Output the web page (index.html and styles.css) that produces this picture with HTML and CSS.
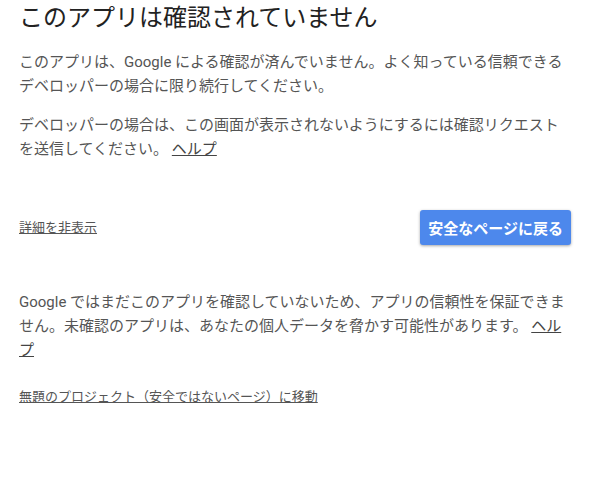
FILE: index.html
```html
<!DOCTYPE html>
<html lang="ja">
<head>
    <meta charset="UTF-8">
    <meta name="viewport" content="width=device-width, initial-scale=1.0">
    <title>このアプリは確認されていません</title>
    <link rel="stylesheet" href="styles.css">
</head>
<body>
    <div class="container">
        <h1>このアプリは確認されていません</h1>
        <p class="text first">このアプリは、Google による確認が済んでいません。よく知っている信頼できるデベロッパーの場合に限り続行してください。</p>
        <p class="text">デベロッパーの場合は、この画面が表示されないようにするには確認リクエストを送信してください。 <a href="#" class="link">ヘルプ</a></p>

        <div class="actions">
            <a href="#" class="small-link">詳細を非表示</a>
            <button class="button">安全なページに戻る</button>
        </div>

        <p class="text details">Google ではまだこのアプリを確認していないため、アプリの信頼性を保証できません。未確認のアプリは、あなたの個人データを脅かす可能性があります。 <a href="#" class="link">ヘルプ</a></p>
        <p class="proceed"><a href="#" class="small-link">無題のプロジェクト（安全ではないページ）に移動</a></p>
    </div>
</body>
</html>
```

FILE: styles.css
```css
body {
    font-family: Roboto, "Noto Sans CJK JP", sans-serif;
    margin: 0;
    padding: 0;
    background-color: #fff;
}
.container {
    width: 552px;
    padding: 2px 23px 0 19px;
}
h1 {
    margin: 0;
    font-size: 24px;
    font-weight: 400;
    line-height: 32px;
    color: #222;
}
.text {
    margin: 15px 0 0;
    font-size: 15px;
    line-height: 24px;
    color: #555;
}
.text.first {
    margin-top: 16px;
}
.link {
    color: #444;
    text-decoration: underline;
}
.actions {
    display: flex;
    justify-content: space-between;
    align-items: center;
    margin-top: 49px;
}
.small-link {
    font-size: 13px;
    line-height: 20px;
    color: #555;
    text-decoration: underline;
}
.button {
    height: 35px;
    padding: 0 8px;
    font-family: Roboto, "Noto Sans CJK JP", sans-serif;
    font-size: 15px;
    font-weight: 700;
    color: #fff;
    background-color: #4d88ec;
    border: none;
    border-radius: 3px;
    box-shadow: 0 1px 3px rgba(0, 0, 0, 0.35);
    cursor: pointer;
}
.text.details {
    margin-top: 45px;
}
.proceed {
    margin: 22px 0 0;
    line-height: 24px;
}
```
